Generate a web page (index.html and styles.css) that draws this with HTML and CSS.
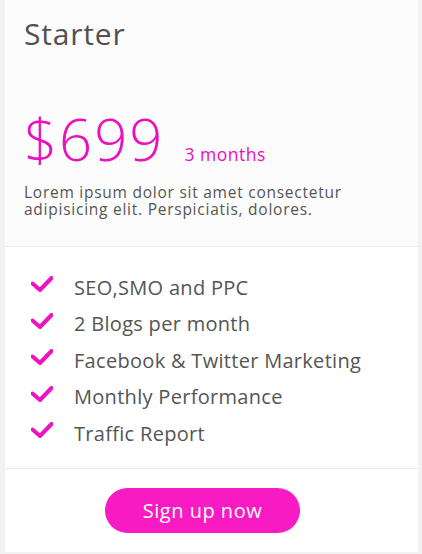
FILE: index.html
```html
<!DOCTYPE html>
<html lang="en">
<head>
<meta charset="utf-8">
<title>Starter plan</title>
<link rel="stylesheet" href="styles.css">
</head>
<body>
<div class="card">
  <div class="card-head">
    <h2 class="plan">Starter</h2>
    <div class="price-row">
      <span class="price">$699</span>
      <span class="period">3 months</span>
    </div>
    <p class="desc">Lorem ipsum dolor sit amet consectetur adipisicing elit. Perspiciatis, dolores.</p>
  </div>
  <ul class="features">
    <li class="feature"><svg class="check" viewBox="0 0 22 16"><polyline points="1.5,7.5 9,14 20.5,2"/></svg><span>SEO,SMO and PPC</span></li>
    <li class="feature"><svg class="check" viewBox="0 0 22 16"><polyline points="1.5,7.5 9,14 20.5,2"/></svg><span>2 Blogs per month</span></li>
    <li class="feature"><svg class="check" viewBox="0 0 22 16"><polyline points="1.5,7.5 9,14 20.5,2"/></svg><span>Facebook &amp; Twitter Marketing</span></li>
    <li class="feature"><svg class="check" viewBox="0 0 22 16"><polyline points="1.5,7.5 9,14 20.5,2"/></svg><span>Monthly Performance</span></li>
    <li class="feature"><svg class="check" viewBox="0 0 22 16"><polyline points="1.5,7.5 9,14 20.5,2"/></svg><span>Traffic Report</span></li>
  </ul>
  <div class="card-foot">
    <button class="signup" type="button">Sign up now</button>
  </div>
</div>
</body>
</html>
```

FILE: styles.css
```css
html, body {
  margin: 0;
  padding: 0;
}
body {
  background: #f2f2f2;
  font-family: "Open Sans", "Noto Sans", sans-serif;
  color: #555;
  width: 422px;
  height: 554px;
  overflow: hidden;
}
.card {
  margin: 0 4px 0 5px;
  background: #fff;
  height: 552px;
  display: flex;
  flex-direction: column;
}
.card-head {
  background: #fcfcfc;
  border-bottom: 1px solid #ececec;
  height: 247px;
  box-sizing: border-box;
  padding: 14px 19px 0;
}
.plan {
  margin: 0;
  font-weight: 400;
  font-size: 30px;
  letter-spacing: 0.8px;
  line-height: 40px;
  color: #505050;
}
.price-row {
  display: flex;
  align-items: baseline;
  margin-top: 55px;
  height: 60px;
}
.price {
  font-size: 58px;
  font-weight: 300;
  letter-spacing: 2px;
  line-height: 60px;
  color: #ec0fbd;
}
.period {
  margin-left: 20px;
  font-size: 17.5px;
  letter-spacing: 0.5px;
  color: #ec0fbd;
}
.desc {
  margin: 15px 0 0;
  font-size: 15.5px;
  letter-spacing: 0.75px;
  line-height: 16.5px;
  color: #555;
}
.features {
  list-style: none;
  margin: 0;
  padding: 22px 0 16px 26px;
  border-bottom: 1px solid #ececec;
}
.feature {
  display: flex;
  align-items: center;
  height: 36.5px;
  font-size: 20px;
  letter-spacing: 0.3px;
  color: #555;
}
.check {
  width: 22px;
  height: 16px;
  margin-top: -6px;
  margin-right: 21px;
  flex-shrink: 0;
  fill: none;
  stroke: #f012be;
  stroke-width: 4;
  stroke-linecap: round;
  stroke-linejoin: round;
}
.card-foot {
  display: flex;
  justify-content: flex-start;
  padding: 19px 0 18px 100px;
}
.signup {
  width: 195px;
  height: 45px;
  border: 0;
  border-radius: 23px;
  background: #f81ac2;
  color: #fff;
  font-family: "Open Sans", "Noto Sans", sans-serif;
  font-size: 20px;
  letter-spacing: 0.5px;
  cursor: pointer;
}
```
